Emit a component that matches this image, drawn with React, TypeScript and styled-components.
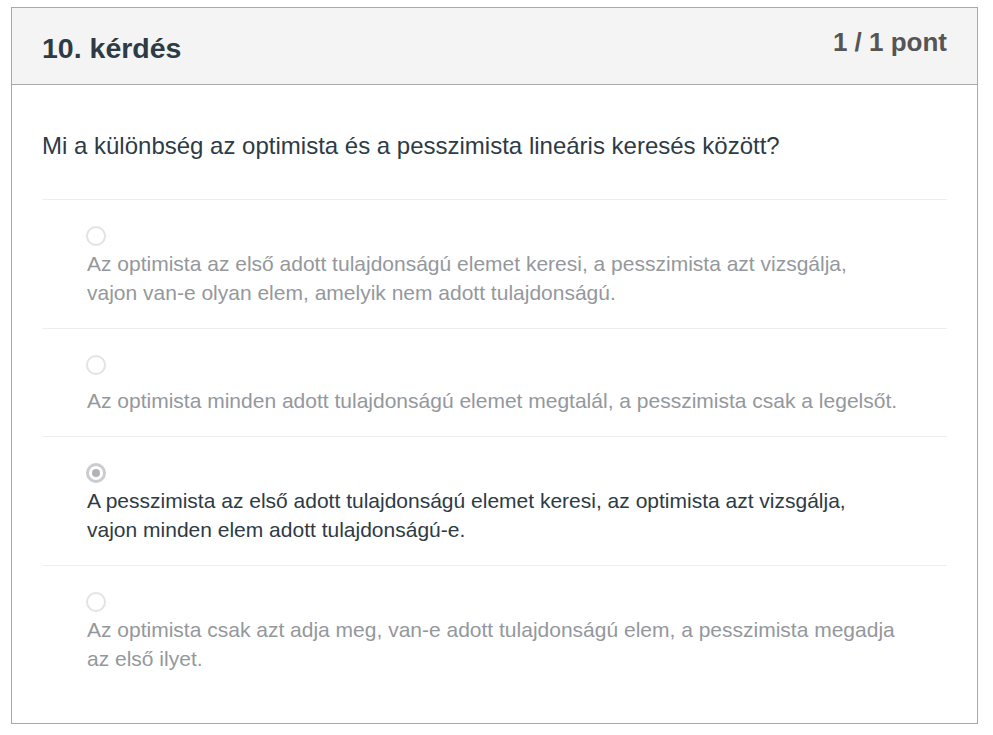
import React from "react";
import styled, { createGlobalStyle } from "styled-components";

const GlobalStyle = createGlobalStyle`
  body {
    margin: 0;
    background: #ffffff;
    font-family: "Liberation Sans", Arial, sans-serif;
  }
`;

const Page = styled.div`
  padding: 7px 15px 11px 11px;
`;

const Card = styled.section`
  box-sizing: border-box;
  width: 967px;
  border: 1px solid #a9a9a9;
  background: #ffffff;
`;

const Header = styled.header`
  box-sizing: border-box;
  height: 77px;
  display: flex;
  justify-content: space-between;
  align-items: flex-start;
  padding: 0 30px;
  background: #f4f4f4;
  border-bottom: 1px solid #a9a9a9;
`;

const Title = styled.h2`
  margin: 26px 0 0;
  font-size: 28.5px;
  line-height: 28px;
  font-weight: 700;
  color: #2d3b45;
`;

const Points = styled.div`
  margin-top: 21px;
  font-size: 26px;
  line-height: 26px;
  font-weight: 700;
  color: #555555;
`;

const Body = styled.div`
  padding: 0 30px 29px;
`;

const Question = styled.p`
  margin: 0;
  padding: 46px 0 38px;
  font-size: 24px;
  line-height: 30px;
  color: #2d3b45;
  border-bottom: 1px solid #eeeeee;
`;

const Option = styled.label<{ $last?: boolean }>`
  display: block;
  padding: 26px 0 21px 45px;
  border-bottom: ${(p) => (p.$last ? "none" : "1px solid #eeeeee")};
`;

const Radio = styled.span<{ $checked?: boolean }>`
  box-sizing: border-box;
  display: flex;
  align-items: center;
  justify-content: center;
  width: 20px;
  height: 20px;
  margin-left: -1px;
  border-radius: 50%;
  border: ${(p) => (p.$checked ? "3px solid #cbcbd3" : "2px solid #e3e3e3")};
  background: #ffffff;

  &::after {
    content: "";
    display: ${(p) => (p.$checked ? "block" : "none")};
    width: 8px;
    height: 8px;
    border-radius: 50%;
    background: #b2b2ba;
  }
`;

const OptionText = styled.div<{ $selected?: boolean }>`
  display: flex;
  flex-direction: column;
  justify-content: flex-end;
  min-height: 37px;
  margin-top: 3px;
  font-size: 21px;
  line-height: 29px;
  color: ${(p) => (p.$selected ? "#2d3b45" : "#94989d")};
`;

const options = [
  {
    lines: [
      "Az optimista az első adott tulajdonságú elemet keresi, a pesszimista azt vizsgálja,",
      "vajon van-e olyan elem, amelyik nem adott tulajdonságú.",
    ],
    selected: false,
  },
  {
    lines: [
      "Az optimista minden adott tulajdonságú elemet megtalál, a pesszimista csak a legelsőt.",
    ],
    selected: false,
  },
  {
    lines: [
      "A pesszimista az első adott tulajdonságú elemet keresi, az optimista azt vizsgálja,",
      "vajon minden elem adott tulajdonságú-e.",
    ],
    selected: true,
  },
  {
    lines: [
      "Az optimista csak azt adja meg, van-e adott tulajdonságú elem, a pesszimista megadja",
      "az első ilyet.",
    ],
    selected: false,
  },
];

export default function App() {
  return (
    <>
      <GlobalStyle />
      <Page>
        <Card>
          <Header>
            <Title>10. kérdés</Title>
            <Points>1 / 1 pont</Points>
          </Header>
          <Body>
            <Question>
              Mi a különbség az optimista és a pesszimista lineáris keresés között?
            </Question>
            {options.map((o, i) => (
              <Option key={i} $last={i === options.length - 1}>
                <Radio $checked={o.selected} />
                <OptionText $selected={o.selected}>
                  {o.lines.map((l, j) => (
                    <span key={j}>{l}</span>
                  ))}
                </OptionText>
              </Option>
            ))}
          </Body>
        </Card>
      </Page>
    </>
  );
}
